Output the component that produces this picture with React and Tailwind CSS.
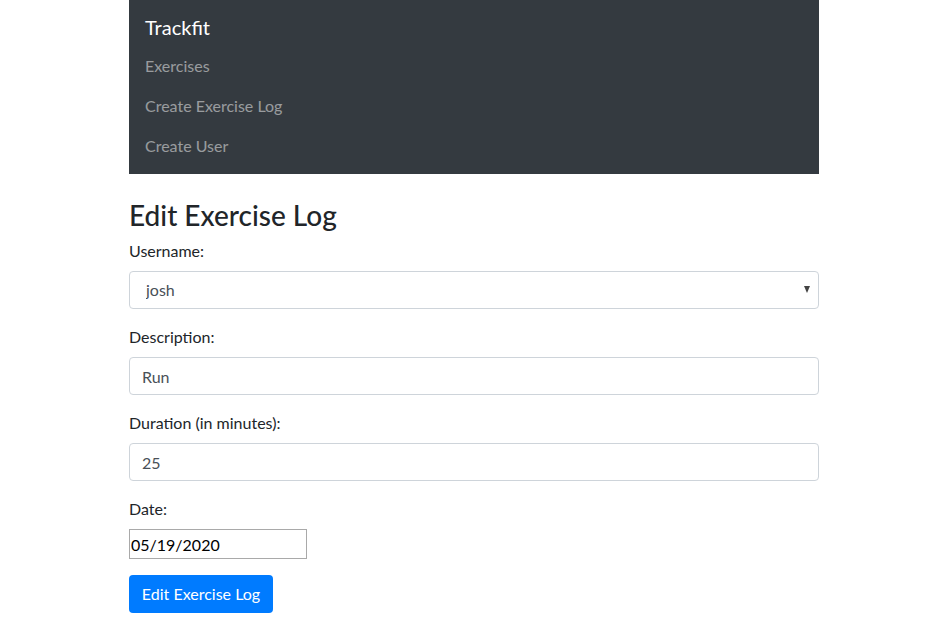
import React from "react";

export default function App() {
  return (
    <div className="w-[950px] min-h-[625px] bg-white font-['Lato','Noto_Sans',sans-serif] text-[16px] text-[#212529]">
      <div className="ml-[129px] w-[690px]">
        <nav className="bg-[#343a40] px-4 pt-2 pb-2 h-[174px]">
          <div className="h-[38px] pt-[4px] text-[20px] leading-[30px] text-white">Trackfit</div>
          <div className="flex flex-col">
            <a className="h-[40px] leading-[40px] text-white/50">Exercises</a>
            <a className="h-[40px] leading-[40px] text-white/50">Create Exercise Log</a>
            <a className="h-[40px] leading-[40px] text-white/50">Create User</a>
          </div>
        </nav>
        <div className="h-[24px]" />
        <h3 className="text-[28px] leading-[34px] font-medium mb-[7px]">Edit Exercise Log</h3>
        <form>
          <div className="mb-4">
            <label className="block leading-[24px] mb-2">Username:</label>
            <div className="relative">
              <select className="w-full h-[38px] appearance-none rounded border border-[#ced4da] bg-white pl-4 pr-3 text-[#495057] outline-none">
                <option>josh</option>
              </select>
              <span className="pointer-events-none absolute right-[9px] top-[15px] w-0 h-0 border-l-[3.5px] border-r-[3.5px] border-t-[7px] border-l-transparent border-r-transparent border-t-[#444]" />
            </div>
          </div>
          <div className="mb-4">
            <label className="block leading-[24px] mb-2">Description:</label>
            <input readOnly value="Run" className="w-full h-[38px] rounded border border-[#ced4da] px-3 text-[#495057] outline-none" />
          </div>
          <div className="mb-4">
            <label className="block leading-[24px] mb-2">Duration (in minutes):</label>
            <input readOnly value="25" className="w-full h-[38px] rounded border border-[#ced4da] px-3 text-[#495057] outline-none" />
          </div>
          <div className="mb-4">
            <label className="block leading-[24px] mb-2">Date:</label>
            <input readOnly value="05/19/2020" className="block w-[178px] h-[30px] border border-[#a9a9a9] px-[1px] text-black outline-none" />
          </div>
          <button type="button" className="h-[38px] w-[144px] rounded bg-[#007bff] text-white leading-[24px]">Edit Exercise Log</button>
        </form>
      </div>
    </div>
  );
}
